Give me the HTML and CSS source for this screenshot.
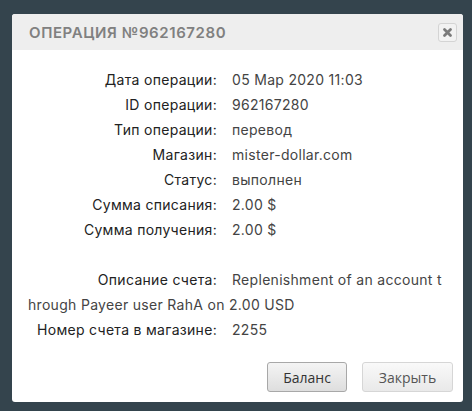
FILE: index.html
```html
<!DOCTYPE html>
<html>
<head>
<meta charset="utf-8">
<link rel="stylesheet" href="styles.css">
</head>
<body>
<div class="dialog">
  <div class="dialog-head">
    <span class="dialog-title">Операция №962167280</span>
    <button class="close-btn" aria-label="close">
      <svg width="11" height="11" viewBox="0 0 11 11"><path d="M2.5 2.5 L8.5 8.5 M8.5 2.5 L2.5 8.5" stroke="#7a7a7a" stroke-width="2.8" stroke-linecap="round"/></svg>
    </button>
  </div>
  <div class="dialog-body">
    <div class="row"><span class="lbl">Дата операции:</span><span class="val">05 Мар 2020 11:03</span></div>
    <div class="row"><span class="lbl">ID операции:</span><span class="val">962167280</span></div>
    <div class="row"><span class="lbl">Тип операции:</span><span class="val">перевод</span></div>
    <div class="row"><span class="lbl">Магазин:</span><span class="val">mister-dollar.com</span></div>
    <div class="row"><span class="lbl">Статус:</span><span class="val">выполнен</span></div>
    <div class="row"><span class="lbl">Сумма списания:</span><span class="val">2.00 $</span></div>
    <div class="row"><span class="lbl">Сумма получения:</span><span class="val">2.00 $</span></div>
    <div class="row empty"></div>
    <div class="row"><span class="lbl">Описание счета:</span><span class="val wrap">Replenishment of an account through Payeer user RahA on 2.00 USD</span></div>
    <div class="row"><span class="lbl">Номер счета в магазине:</span><span class="val">2255</span></div>
  </div>
  <div class="dialog-foot">
    <button class="btn btn-primary">Баланс</button>
    <button class="btn btn-light">Закрыть</button>
  </div>
</div>
</body>
</html>
```
FILE: styles.css
```css
html, body {
  margin: 0;
  padding: 0;
  background: #34444d;
  height: 100%;
}
body {
  padding: 14px 9px 0 12px;
  box-sizing: border-box;
}
.dialog {
  width: 451px;
  height: 388px;
  background: #fff;
  border-radius: 3px;
  overflow: hidden;
  font-family: Inter, "Noto Sans", sans-serif;
}
.dialog-head {
  height: 36px;
  background: #eeeeee;
  display: flex;
  align-items: center;
  justify-content: space-between;
  padding: 0 6px 0 17px;
}
.dialog-title {
  text-transform: uppercase;
  color: #808080;
  font-size: 15px;
  font-weight: 600;
  letter-spacing: 0.6px;
}
.close-btn {
  width: 19px;
  height: 19px;
  padding: 0;
  border: 1px solid #d4d4d4;
  border-radius: 3px;
  background: #f2f2f2;
  display: flex;
  align-items: center;
  justify-content: center;
  margin-top: 1px;
}
.dialog-body {
  padding: 17px 16px 0 16px;
  font-size: 14px;
  letter-spacing: 0.3px;
  color: #333;
}
.row {
  line-height: 25px;
  min-height: 25px;
}
.lbl {
  display: inline-block;
  width: 189px;
  text-align: right;
  padding-right: 15px;
  color: #222;
}
.val {
  color: #444;
}
.wrap {
  word-break: break-all;
}
.dialog-foot {
  display: flex;
  justify-content: flex-end;
  gap: 15px;
  padding: 20px 10px 0 0;
}
.btn {
  height: 30px;
  font-family: "Open Sans", "Noto Sans", sans-serif;
  font-size: 14px;
  border-radius: 3px;
  padding: 0;
}
.btn-primary {
  width: 80px;
  border: 1px solid #a8a8a8;
  background: linear-gradient(#f4f4f4, #dedede);
  color: #333;
}
.btn-light {
  width: 91px;
  border: 1px solid #d6d6d6;
  background: linear-gradient(#f9f9f9, #e9e9e9);
  color: #555;
}
```
